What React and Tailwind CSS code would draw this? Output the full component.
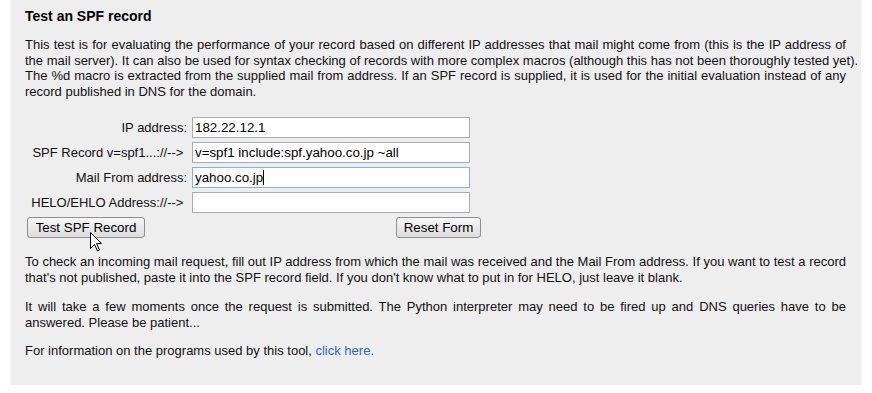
import React from "react";

const J = ({ children }) => (
  <div className="whitespace-nowrap text-justify [text-align-last:justify]">{children}</div>
);
const L = ({ children }) => <div className="whitespace-nowrap">{children}</div>;

const Field = ({ label, value, focused }) => (
  <div className="flex items-center h-[21px]">
    <div className="w-[162px] text-right whitespace-nowrap">{label}</div>
    <div
      className={
        "ml-[5px] w-[278px] h-[21px] bg-white flex items-center px-[2px] text-[13.33px] text-black border " +
        (focused ? "border-[#80b3e6]" : "border-[#abadb3]")
      }
    >
      <span className="whitespace-pre">{value}</span>
      {focused && <span className="w-px h-[15px] bg-black" />}
    </div>
  </div>
);

const Btn = ({ children, className = "" }) => (
  <div
    className={
      "h-[21px] flex items-center justify-center text-[13.33px] text-black border border-[#8f8f8f] rounded-[3px] bg-gradient-to-b from-[#f7f7f7] to-[#dcdcdc] " +
      className
    }
  >
    {children}
  </div>
);

export default function App() {
  return (
    <div
      className="relative w-[872px] h-[393px] bg-white text-[#111] text-[13px]"
      style={{ fontFamily: '"Liberation Sans", Arial, sans-serif' }}
    >
      <div className="ml-[11px] w-[850px] h-[385px] bg-[#eeeeee] pt-[8px] pl-[14px] pr-[15px]">
        <div className="text-[14px] font-bold leading-[16px] text-black">Test an SPF record</div>

        <div className="mt-[13px] leading-[15.5px]">
          <J>
            This test is for evaluating the performance of your record based on different IP addresses that mail might come from (this is the IP address of
          </J>
          <J>
            the mail server). It can also be used for syntax checking of records with more complex macros (although this has not been thoroughly tested yet).
          </J>
          <J>
            The %d macro is extracted from the supplied mail from address. If an SPF record is supplied, it is used for the initial evaluation instead of any
          </J>
          <L>record published in DNS for the domain.</L>
        </div>

        <div className="mt-[18px] flex flex-col gap-[4px]">
          <Field label="IP address:" value="182.22.12.1" />
          <Field label={"SPF Record v=spf1...://-->\u00a0"} value="v=spf1 include:spf.yahoo.co.jp ~all" />
          <Field label="Mail From address:" value="yahoo.co.jp" focused />
          <Field label={"HELO/EHLO Address://-->\u00a0"} value="" />
          <div className="flex">
            <Btn className="ml-[2px] w-[118px]">Test SPF Record</Btn>
            <Btn className="ml-[251px] w-[85px]">Reset Form</Btn>
          </div>
        </div>

        <div className="mt-[16px] leading-[15.5px]">
          <J>
            To check an incoming mail request, fill out IP address from which the mail was received and the Mail From address. If you want to test a record
          </J>
          <L>
            that's not published, paste it into the SPF record field. If you don't know what to put in for HELO, just leave it blank.
          </L>
        </div>

        <div className="mt-[14px] leading-[15.5px]">
          <J>
            It will take a few moments once the request is submitted. The Python interpreter may need to be fired up and DNS queries have to be
          </J>
          <L>answered. Please be patient...</L>
        </div>

        <div className="mt-[13px] leading-[15.5px]">
          <L>
            For information on the programs used by this tool, <span className="text-[#3366cc]">click here</span>.
          </L>
        </div>
      </div>

      <svg
        className="absolute left-[90px] top-[232px]"
        width="13"
        height="20"
        viewBox="0 0 13 20"
      >
        <path
          d="M0.5 0.5 L0.5 16.5 L4.5 12.5 L7.5 19 L9.5 18 L6.6 11.6 L11.5 11.5 Z"
          fill="white"
          stroke="black"
          strokeWidth="1"
          strokeLinejoin="miter"
        />
      </svg>
    </div>
  );
}
